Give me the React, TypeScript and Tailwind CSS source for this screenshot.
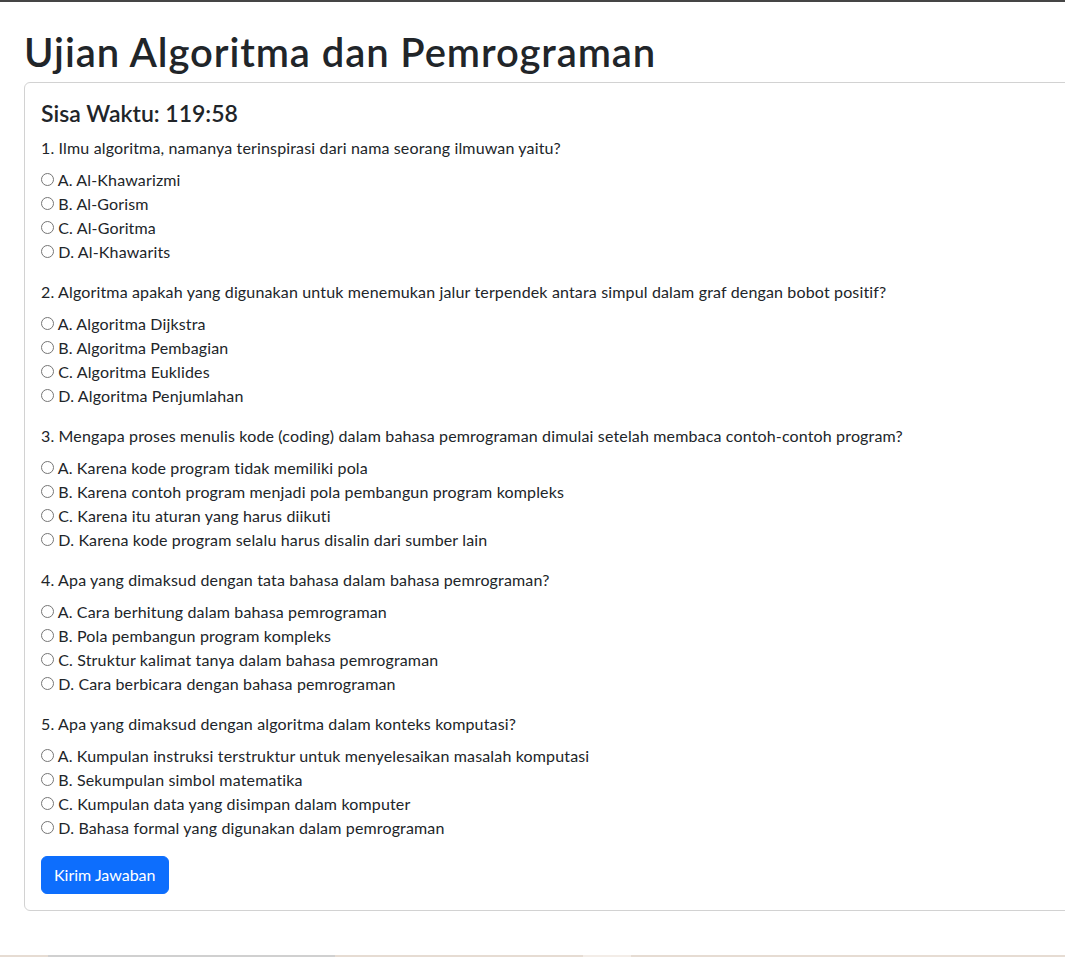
const questions = [
  {
    q: "1. Ilmu algoritma, namanya terinspirasi dari nama seorang ilmuwan yaitu?",
    options: ["A. Al-Khawarizmi", "B. Al-Gorism", "C. Al-Goritma", "D. Al-Khawarits"],
  },
  {
    q: "2. Algoritma apakah yang digunakan untuk menemukan jalur terpendek antara simpul dalam graf dengan bobot positif?",
    options: [
      "A. Algoritma Dijkstra",
      "B. Algoritma Pembagian",
      "C. Algoritma Euklides",
      "D. Algoritma Penjumlahan",
    ],
  },
  {
    q: "3. Mengapa proses menulis kode (coding) dalam bahasa pemrograman dimulai setelah membaca contoh-contoh program?",
    options: [
      "A. Karena kode program tidak memiliki pola",
      "B. Karena contoh program menjadi pola pembangun program kompleks",
      "C. Karena itu aturan yang harus diikuti",
      "D. Karena kode program selalu harus disalin dari sumber lain",
    ],
  },
  {
    q: "4. Apa yang dimaksud dengan tata bahasa dalam bahasa pemrograman?",
    options: [
      "A. Cara berhitung dalam bahasa pemrograman",
      "B. Pola pembangun program kompleks",
      "C. Struktur kalimat tanya dalam bahasa pemrograman",
      "D. Cara berbicara dengan bahasa pemrograman",
    ],
  },
  {
    q: "5. Apa yang dimaksud dengan algoritma dalam konteks komputasi?",
    options: [
      "A. Kumpulan instruksi terstruktur untuk menyelesaikan masalah komputasi",
      "B. Sekumpulan simbol matematika",
      "C. Kumpulan data yang disimpan dalam komputer",
      "D. Bahasa formal yang digunakan dalam pemrograman",
    ],
  },
];

export default function App() {
  return (
    <div className="h-[957px] flex flex-col overflow-hidden bg-white border-t-2 border-[#454545] text-[#212529] font-['Lato','Open_Sans',sans-serif] text-base leading-6 tracking-[0.15px]">
      <div className="pl-6 pt-6">
        <h1 className="text-[40px] leading-[1.2] font-semibold tracking-[0.9px] pt-[2px] mb-[6px]">
          Ujian Algoritma dan Pemrograman
        </h1>
        <div className="w-[1100px] border border-[#d2d2d2] rounded-md p-4">
          <h4 className="text-[23px] leading-[29px] font-semibold tracking-normal mb-2">Sisa Waktu: 119:58</h4>
          <form>
            {questions.map((item, i) => (
              <div key={i} className="mb-4">
                <p className="mb-2">{item.q}</p>
                {item.options.map((opt) => (
                  <label key={opt} className="block">
                    <input type="radio" name={"q" + i} className="w-[13px] h-[13px]" /> {opt}
                  </label>
                ))}
              </div>
            ))}
            <button
              type="button"
              className="bg-[#0d6efd] border border-[#0d6efd] text-white px-3 py-1.5 rounded-md leading-6 tracking-normal"
            >
              Kirim Jawaban
            </button>
          </form>
        </div>
      </div>
      <div className="mt-auto h-[2px] flex">
        <div className="w-[48px] bg-[#e6dcd3]" />
        <div className="w-[287px] bg-[#d0d0d0]" />
        <div className="w-[248px] bg-[#e6dcd3]" />
        <div className="w-[48px] bg-[#f3ede8]" />
        <div className="flex-1 bg-[#e6dcd3]" />
      </div>
    </div>
  );
}
